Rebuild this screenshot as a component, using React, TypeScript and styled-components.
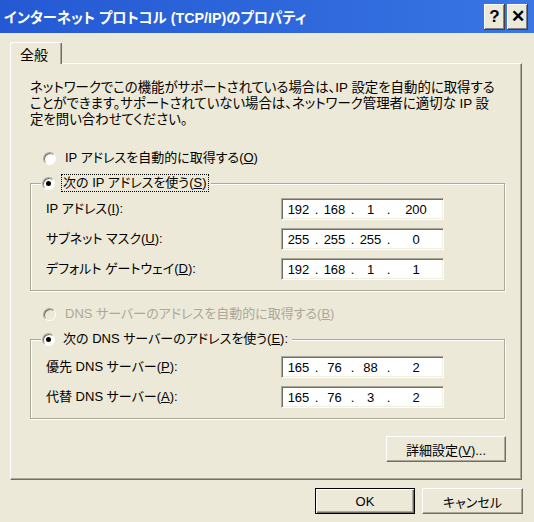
import React from "react";
import styled, { createGlobalStyle } from "styled-components";

const GlobalStyle = createGlobalStyle`
  html, body { margin: 0; padding: 0; background: #ECE9D8; }
  body {
    font-family: "Liberation Sans", "Noto Sans CJK JP", sans-serif;
    font-size: 13px;
    color: #000;
  }
  * { box-sizing: border-box; }
`;

const Window = styled.div`
  width: 534px;
  height: 522px;
  background: #ece9d8;
  display: flex;
  flex-direction: column;
  overflow: hidden;
  font-feature-settings: "palt";
`;

const TitleBar = styled.div`
  height: 33px;
  flex: none;
  display: flex;
  align-items: center;
  padding: 0 6px 0 4px;
  background: linear-gradient(90deg, #2459d3 0%, #2f69dc 60%, #3a76e4 100%);
`;

const Title = styled.div`
  flex: 1;
  color: #fff;
  font-weight: bold;
  font-size: 14.3px;
  white-space: nowrap;
`;

const CaptionButtons = styled.div`
  display: flex;
  gap: 2px;
`;

const CaptionButton = styled.div`
  width: 21px;
  height: 26px;
  background: #ece9d8;
  box-shadow: inset -1px -1px #404040, inset 1px 1px #fff, inset -2px -2px #808080;
  display: flex;
  align-items: center;
  justify-content: center;
  font-family: "Liberation Sans", sans-serif;
  font-weight: bold;
  font-size: 17px;
  line-height: 1;
`;

const Body = styled.div`
  flex: 1;
  display: flex;
  flex-direction: column;
  padding: 9px 12px 0 10px;
`;

const TabStrip = styled.div`
  display: flex;
  height: 21px;
`;

const Tab = styled.div`
  position: relative;
  z-index: 1;
  width: 52px;
  height: 22px;
  background: #ece9d8;
  border-top: 1px solid #fff;
  border-left: 1px solid #fff;
  border-right: 1px solid #716f64;
  box-shadow: inset -1px 0 #aca899;
  border-radius: 2px 2px 0 0;
  display: flex;
  justify-content: center;
  padding-top: 3px;
  padding-right: 4px;
  font-family: "Noto Sans CJK JP", sans-serif;
  font-size: 14px;
  line-height: 16px;
`;

const Panel = styled.div`
  display: flex;
  flex-direction: column;
  height: 417px;
  border: 1px solid;
  border-color: #fff #716f64 #716f64 #fff;
  box-shadow: inset -1px -1px #aca899;
  padding: 16px 16px 0 19px;
`;

const Description = styled.p`
  margin: 0;
  font-size: 13.4px;
  line-height: 16px;
  white-space: nowrap;
`;

const RadioRow = styled.div<{ $top: number; $disabled?: boolean }>`
  display: flex;
  align-items: center;
  height: 18px;
  margin-top: ${(p) => p.$top}px;
  padding-left: 13px;
  gap: 7px;
  color: ${(p) => (p.$disabled ? "#aca899" : "#000")};
`;

const RadioCircle = styled.span<{ $checked?: boolean; $disabled?: boolean }>`
  position: relative;
  flex: none;
  width: 13px;
  height: 13px;
  border-radius: 50%;
  background: ${(p) => (p.$disabled ? "#ece9d8" : "#fff")};
  border: 1px solid;
  border-color: #aca899 #fff #fff #aca899;
  box-shadow: inset 1px 1px #716f64;
  &::after {
    content: "";
    display: ${(p) => (p.$checked ? "block" : "none")};
    position: absolute;
    left: 3px;
    top: 3px;
    width: 5px;
    height: 5px;
    border-radius: 50%;
    background: #000;
  }
`;

const RadioLabel = styled.span<{ $focused?: boolean }>`
  white-space: nowrap;
  line-height: 16px;
  padding: 0 1px;
  border: 1px dotted ${(p) => (p.$focused ? "#000" : "transparent")};
`;

const GroupBox = styled.fieldset<{ $top: number; $padTop: number; $padBottom: number }>`
  margin: ${(p) => p.$top}px 0 0 0;
  border: 1px solid #aca899;
  box-shadow: 1px 1px #fff, inset 1px 1px #fff;
  padding: ${(p) => p.$padTop}px 60px ${(p) => p.$padBottom}px 15px;
  width: 475px;
  min-width: 0;
  display: grid;
  grid-template-columns: 1fr 163px;
  row-gap: 8px;
  align-items: center;
`;

const Legend = styled.legend`
  display: flex;
  align-items: center;
  gap: 6px;
  height: 18px;
  padding: 0 2px 0 1px;
  margin-left: -5px;
  background: #ece9d8;
`;

const FieldLabel = styled.span`
  white-space: nowrap;
  line-height: 22px;
`;

const IpBox = styled.div`
  height: 22px;
  background: #fff;
  border: 1px solid;
  border-color: #aca899 #fff #fff #aca899;
  box-shadow: inset 1px 1px #716f64, inset -1px -1px #f1efe2;
  display: flex;
  align-items: center;
  padding-left: 1px;
  font-family: "Liberation Sans", sans-serif;
  font-size: 13px;
`;

const Octet = styled.span<{ $w: number }>`
  width: ${(p) => p.$w}px;
  text-align: center;
`;

const Dot = styled.span`
  width: 5px;
  text-align: center;
`;

const Button = styled.button<{ $default?: boolean; $w: number }>`
  width: ${(p) => p.$w}px;
  height: 26px;
  background: #ece9d8;
  font-family: "Liberation Sans", "Noto Sans CJK JP", sans-serif;
  font-feature-settings: "palt";
  font-size: 13px;
  color: #000;
  padding: 0;
  border: 1px solid;
  border-color: ${(p) => (p.$default ? "#000" : "#fff #716f64 #716f64 #fff")};
  box-shadow: ${(p) =>
    p.$default
      ? "inset 1px 1px #fff, inset -1px -1px #716f64, inset -2px -2px #aca899"
      : "inset -1px -1px #aca899"};
`;

const AdvancedButton = styled(Button)`
  align-self: flex-end;
  margin-top: 17px;
  margin-right: -1px;
`;

const Footer = styled.div`
  display: flex;
  justify-content: flex-end;
  gap: 7px;
  padding-top: 8px;
  margin-right: -1px;
`;

const widths = [31, 31, 31, 50];

const IpField = ({ value }: { value: string }) => {
  const parts = value.split(".");
  return (
    <IpBox>
      {parts.map((p, i) => (
        <React.Fragment key={i}>
          <Octet $w={widths[i]}>{p}</Octet>
          {i < 3 && <Dot>.</Dot>}
        </React.Fragment>
      ))}
    </IpBox>
  );
};

export default function App() {
  return (
    <>
      <GlobalStyle />
      <Window>
        <TitleBar>
          <Title>インターネット プロトコル (TCP/IP)のプロパティ</Title>
          <CaptionButtons>
            <CaptionButton>?</CaptionButton>
            <CaptionButton>✕</CaptionButton>
          </CaptionButtons>
        </TitleBar>
        <Body>
          <TabStrip>
            <Tab>全般</Tab>
          </TabStrip>
          <Panel>
            <Description>
              ネットワークでこの機能がサポートされている場合は、IP 設定を自動的に取得する
              <br />
              ことができます。サポートされていない場合は、ネットワーク管理者に適切な IP 設
              <br />
              定を問い合わせてください。
            </Description>

            <RadioRow $top={21}>
              <RadioCircle />
              <RadioLabel>
                IP アドレスを自動的に取得する(<u>O</u>)
              </RadioLabel>
            </RadioRow>

            <GroupBox $top={7} $padTop={6} $padBottom={10}>
              <Legend>
                <RadioCircle $checked />
                <RadioLabel $focused>
                  次の IP アドレスを使う(<u>S</u>)
                </RadioLabel>
              </Legend>
              <FieldLabel>
                IP アドレス(<u>I</u>):
              </FieldLabel>
              <IpField value="192.168.1.200" />
              <FieldLabel>
                サブネット マスク(<u>U</u>):
              </FieldLabel>
              <IpField value="255.255.255.0" />
              <FieldLabel>
                デフォルト ゲートウェイ(<u>D</u>):
              </FieldLabel>
              <IpField value="192.168.1.1" />
            </GroupBox>

            <RadioRow $top={14} $disabled>
              <RadioCircle $disabled />
              <RadioLabel>
                DNS サーバーのアドレスを自動的に取得する(<u>B</u>)
              </RadioLabel>
            </RadioRow>

            <GroupBox $top={7} $padTop={8} $padBottom={10}>
              <Legend>
                <RadioCircle $checked />
                <RadioLabel>
                  次の DNS サーバーのアドレスを使う(<u>E</u>):
                </RadioLabel>
              </Legend>
              <FieldLabel>
                優先 DNS サーバー(<u>P</u>):
              </FieldLabel>
              <IpField value="165.76.88.2" />
              <FieldLabel>
                代替 DNS サーバー(<u>A</u>):
              </FieldLabel>
              <IpField value="165.76.3.2" />
            </GroupBox>

            <AdvancedButton $w={120}>
              詳細設定(<u>V</u>)...
            </AdvancedButton>
          </Panel>
          <Footer>
            <Button $default $w={100}>OK</Button>
            <Button $w={101}>キャンセル</Button>
          </Footer>
        </Body>
      </Window>
    </>
  );
}
